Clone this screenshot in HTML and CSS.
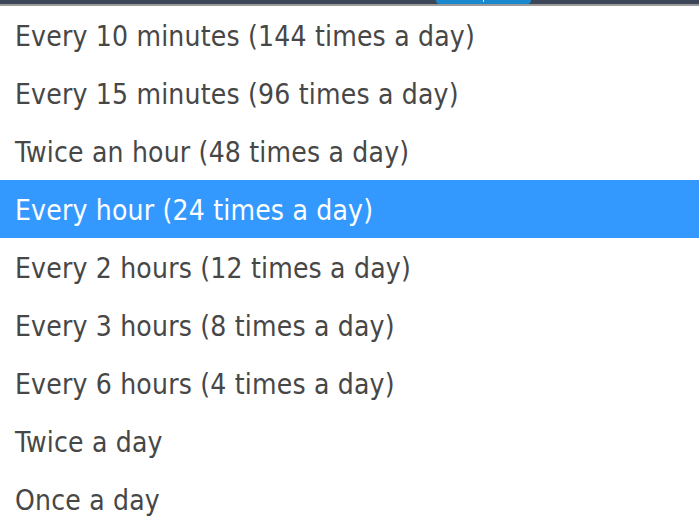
FILE: index.html
```html
<!DOCTYPE html>
<html>
<head>
<meta charset="utf-8">
<link rel="stylesheet" href="styles.css">
</head>
<body>
<div class="topbar"><div class="tab"><span class="tab-mark"></span></div></div>
<div class="divider"></div>
<ul class="options">
  <li class="option">Every 10 minutes (144 times a day)</li>
  <li class="option">Every 15 minutes (96 times a day)</li>
  <li class="option">Twice an hour (48 times a day)</li>
  <li class="option selected">Every hour (24 times a day)</li>
  <li class="option">Every 2 hours (12 times a day)</li>
  <li class="option">Every 3 hours (8 times a day)</li>
  <li class="option">Every 6 hours (4 times a day)</li>
  <li class="option">Twice a day</li>
  <li class="option">Once a day</li>
</ul>
</body>
</html>
```
FILE: styles.css
```css
html, body {
  margin: 0;
  padding: 0;
  background: #ffffff;
  overflow: hidden;
}
.topbar {
  height: 4px;
  background: #3c4656;
  display: flex;
  padding-left: 436px;
}
.tab {
  width: 95px;
  height: 4px;
  background: #1a88cc;
  border-radius: 0 0 6px 6px;
  display: flex;
  justify-content: center;
}
.tab-mark {
  width: 1px;
  height: 2px;
  background: #cfe6f5;
}
.divider {
  height: 2px;
  background: #9a9a9a;
}
.options {
  list-style: none;
  margin: 0;
  padding: 0;
  display: flex;
  flex-direction: column;
}
.option {
  height: 58px;
  box-sizing: border-box;
  padding-top: 3px;
  display: flex;
  align-items: center;
  padding-left: 15px;
  font-family: "DejaVu Sans Condensed", "DejaVu Sans", sans-serif;
  font-size: 28px;
  letter-spacing: 0.2px;
  color: #474747;
  white-space: nowrap;
}
.option.selected {
  background: #3399ff;
  color: #ffffff;
}
```
